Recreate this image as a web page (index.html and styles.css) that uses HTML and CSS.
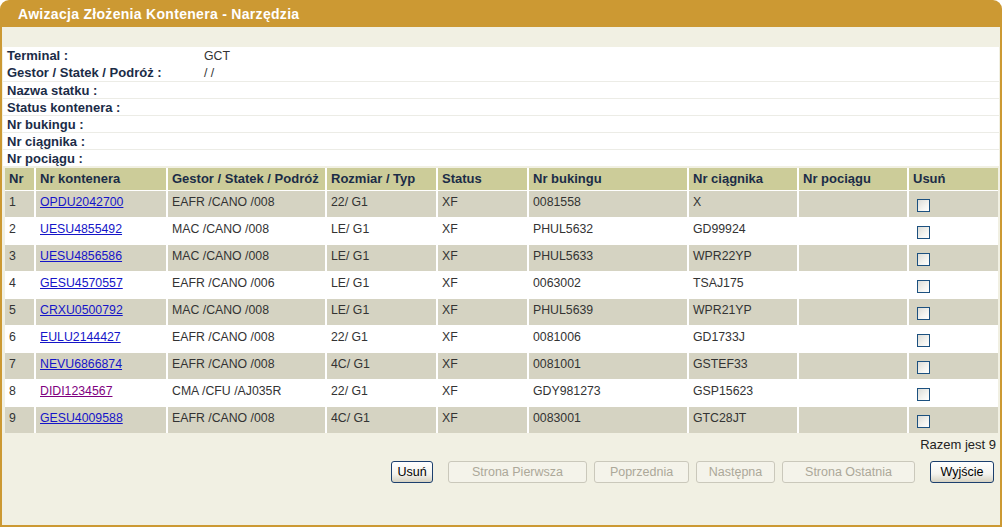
FILE: index.html
```html
<!DOCTYPE html>
<html lang="pl">
<head>
<meta charset="utf-8">
<title>Awizacja Złożenia Kontenera - Narzędzia</title>
<link rel="stylesheet" href="styles.css">
</head>
<body>
<div class="panel">
  <div class="panel-title">Awizacja Złożenia Kontenera - Narzędzia</div>
  <div class="panel-body">
    <div class="band"></div>
    <div class="info">
      <div class="info-row"><span class="info-label">Terminal :</span><span class="info-value">GCT</span></div>
      <div class="info-row"><span class="info-label">Gestor / Statek / Podróż :</span><span class="info-value">/ /</span></div>
      <div class="info-row lined"><span class="info-label">Nazwa statku :</span><span class="info-value"></span></div>
      <div class="info-row lined"><span class="info-label">Status kontenera :</span><span class="info-value"></span></div>
      <div class="info-row lined"><span class="info-label">Nr bukingu :</span><span class="info-value"></span></div>
      <div class="info-row lined"><span class="info-label">Nr ciągnika :</span><span class="info-value"></span></div>
      <div class="info-row lined"><span class="info-label">Nr pociągu :</span><span class="info-value"></span></div>
    </div>

    <table class="grid">
      <colgroup>
        <col class="c-nr"><col class="c-kont"><col class="c-gest"><col class="c-roz"><col class="c-stat"><col class="c-buk"><col class="c-ciag"><col class="c-poc"><col class="c-usun">
      </colgroup>
      <thead>
        <tr>
          <th>Nr</th><th>Nr kontenera</th><th>Gestor / Statek / Podróż</th><th>Rozmiar / Typ</th><th>Status</th><th>Nr bukingu</th><th>Nr ciągnika</th><th>Nr pociągu</th><th>Usuń</th>
        </tr>
      </thead>
      <tbody>
        <tr class="odd"><td>1</td><td><a href="#">OPDU2042700</a></td><td>EAFR /CANO /008</td><td>22/ G1</td><td>XF</td><td>0081558</td><td>X</td><td></td><td><input type="checkbox" class="chk"></td></tr>
        <tr><td>2</td><td><a href="#">UESU4855492</a></td><td>MAC /CANO /008</td><td>LE/ G1</td><td>XF</td><td>PHUL5632</td><td>GD99924</td><td></td><td><input type="checkbox" class="chk"></td></tr>
        <tr class="odd"><td>3</td><td><a href="#">UESU4856586</a></td><td>MAC /CANO /008</td><td>LE/ G1</td><td>XF</td><td>PHUL5633</td><td>WPR22YP</td><td></td><td><input type="checkbox" class="chk"></td></tr>
        <tr><td>4</td><td><a href="#">GESU4570557</a></td><td>EAFR /CANO /006</td><td>LE/ G1</td><td>XF</td><td>0063002</td><td>TSAJ175</td><td></td><td><input type="checkbox" class="chk"></td></tr>
        <tr class="odd"><td>5</td><td><a href="#">CRXU0500792</a></td><td>MAC /CANO /008</td><td>LE/ G1</td><td>XF</td><td>PHUL5639</td><td>WPR21YP</td><td></td><td><input type="checkbox" class="chk"></td></tr>
        <tr><td>6</td><td><a href="#">EULU2144427</a></td><td>EAFR /CANO /008</td><td>22/ G1</td><td>XF</td><td>0081006</td><td>GD1733J</td><td></td><td><input type="checkbox" class="chk"></td></tr>
        <tr class="odd"><td>7</td><td><a href="#">NEVU6866874</a></td><td>EAFR /CANO /008</td><td>4C/ G1</td><td>XF</td><td>0081001</td><td>GSTEF33</td><td></td><td><input type="checkbox" class="chk"></td></tr>
        <tr><td>8</td><td><a href="#" class="visited">DIDI1234567</a></td><td>CMA /CFU /AJ035R</td><td>22/ G1</td><td>XF</td><td>GDY981273</td><td>GSP15623</td><td></td><td><input type="checkbox" class="chk"></td></tr>
        <tr class="odd"><td>9</td><td><a href="#">GESU4009588</a></td><td>EAFR /CANO /008</td><td>4C/ G1</td><td>XF</td><td>0083001</td><td>GTC28JT</td><td></td><td><input type="checkbox" class="chk"></td></tr>
      </tbody>
    </table>

    <div class="total">Razem jest 9</div>

    <div class="actions">
      <button class="btn b-usun">Usuń</button>
      <button class="btn b-first" disabled>Strona Pierwsza</button>
      <button class="btn b-prev" disabled>Poprzednia</button>
      <button class="btn b-next" disabled>Następna</button>
      <button class="btn b-last" disabled>Strona Ostatnia</button>
      <button class="btn b-exit">Wyjście</button>
    </div>
  </div>
</div>
</body>
</html>
```

FILE: styles.css
```css
* { box-sizing: border-box; }

html, body {
  margin: 0;
  padding: 0;
  background: #ffffff;
}

body {
  font-family: "Liberation Sans", Arial, sans-serif;
  font-size: 12px;
  color: #333333;
}

.panel {
  width: 1002px;
  height: 527px;
  display: flex;
  flex-direction: column;
}

.panel-title {
  height: 27px;
  line-height: 28px;
  background: #cc9933;
  color: #ffffff;
  font-weight: bold;
  font-size: 14px;
  letter-spacing: 0.3px;
  padding-left: 18px;
  border-radius: 9px 9px 0 0;
}

.panel-body {
  flex: 1;
  background: #f1f0e3;
  border: 2px solid #cc9933;
  border-top: none;
  display: flex;
  flex-direction: column;
}

.band {
  height: 20px;
}

.info {
  background: #ffffff;
  margin: 0 0 2px 1px;
  width: 996px;
}

.info-row {
  height: 17px;
  display: flex;
  align-items: center;
  padding-left: 4px;
}

.info-row.lined {
  border-top: 1px solid #ecece6;
}

.info-label {
  width: 197px;
  font-weight: bold;
  font-size: 13px;
  color: #1b2c47;
}

.info-value {
  color: #333333;
  font-size: 12.3px;
}

.grid {
  margin-left: 3px;
  width: 993px;
  table-layout: fixed;
  border-collapse: collapse;
  border-spacing: 0;
}

.c-nr { width: 30px; }
.c-kont { width: 132px; }
.c-gest { width: 159px; }
.c-roz { width: 111px; }
.c-stat { width: 91px; }
.c-buk { width: 160px; }
.c-ciag { width: 110px; }
.c-poc { width: 110px; }
.c-usun { width: 90px; }

.grid th,
.grid td {
  text-align: left;
  padding: 0 0 0 4px;
  border-left: 2px solid #ffffff;
  white-space: nowrap;
  overflow: hidden;
}

.grid th:first-child,
.grid td:first-child {
  border-left: none;
}

.grid th {
  height: 22px;
  background: #cccc99;
  color: #1b2c47;
  font-weight: bold;
  font-size: 13px;
  vertical-align: middle;
}

.grid td {
  height: 27px;
  border-top: 1px solid #ffffff;
  vertical-align: top;
  padding-top: 4px;
  line-height: 15px;
  font-size: 12.3px;
  background: #ffffff;
}

.grid tr.odd td {
  background: #d5d3c2;
}

.grid a {
  color: #1515c8;
  text-decoration: underline;
}

.grid a.visited {
  color: #800080;
}

.chk {
  -webkit-appearance: none;
  appearance: none;
  display: block;
  width: 13px;
  height: 13px;
  margin: 4px 0 0 4px;
  border: 1px solid #1c5180;
  background: linear-gradient(135deg, #dcdcd7 0%, #f4f4f0 60%, #ffffff 100%);
  border-radius: 0;
}

.total {
  text-align: right;
  padding-right: 4px;
  margin-top: 4px;
  line-height: 15px;
  font-size: 13px;
  color: #222222;
}

.actions {
  display: flex;
  justify-content: flex-end;
  padding-right: 6px;
  margin-top: 9px;
}

.btn {
  height: 22px;
  font-family: "Liberation Sans", Arial, sans-serif;
  font-size: 12.5px;
  padding: 0;
  border-radius: 3px;
  margin-left: 7px;
  text-align: center;
}

.btn:not(:disabled) {
  border: 1px solid #1c3f6e;
  color: #000000;
  background: linear-gradient(#ffffff 0%, #f4f3ee 60%, #d6d2c2 100%);
}

.btn:disabled {
  border: 1px solid #cac8bb;
  color: #aca899;
  background: #f4f3ea;
}

.b-usun { width: 42px; }
.b-first { width: 139px; margin-left: 15px; }
.b-prev { width: 95px; }
.b-next { width: 79px; }
.b-last { width: 133px; }
.b-exit { width: 64px; margin-left: 15px; }
```
